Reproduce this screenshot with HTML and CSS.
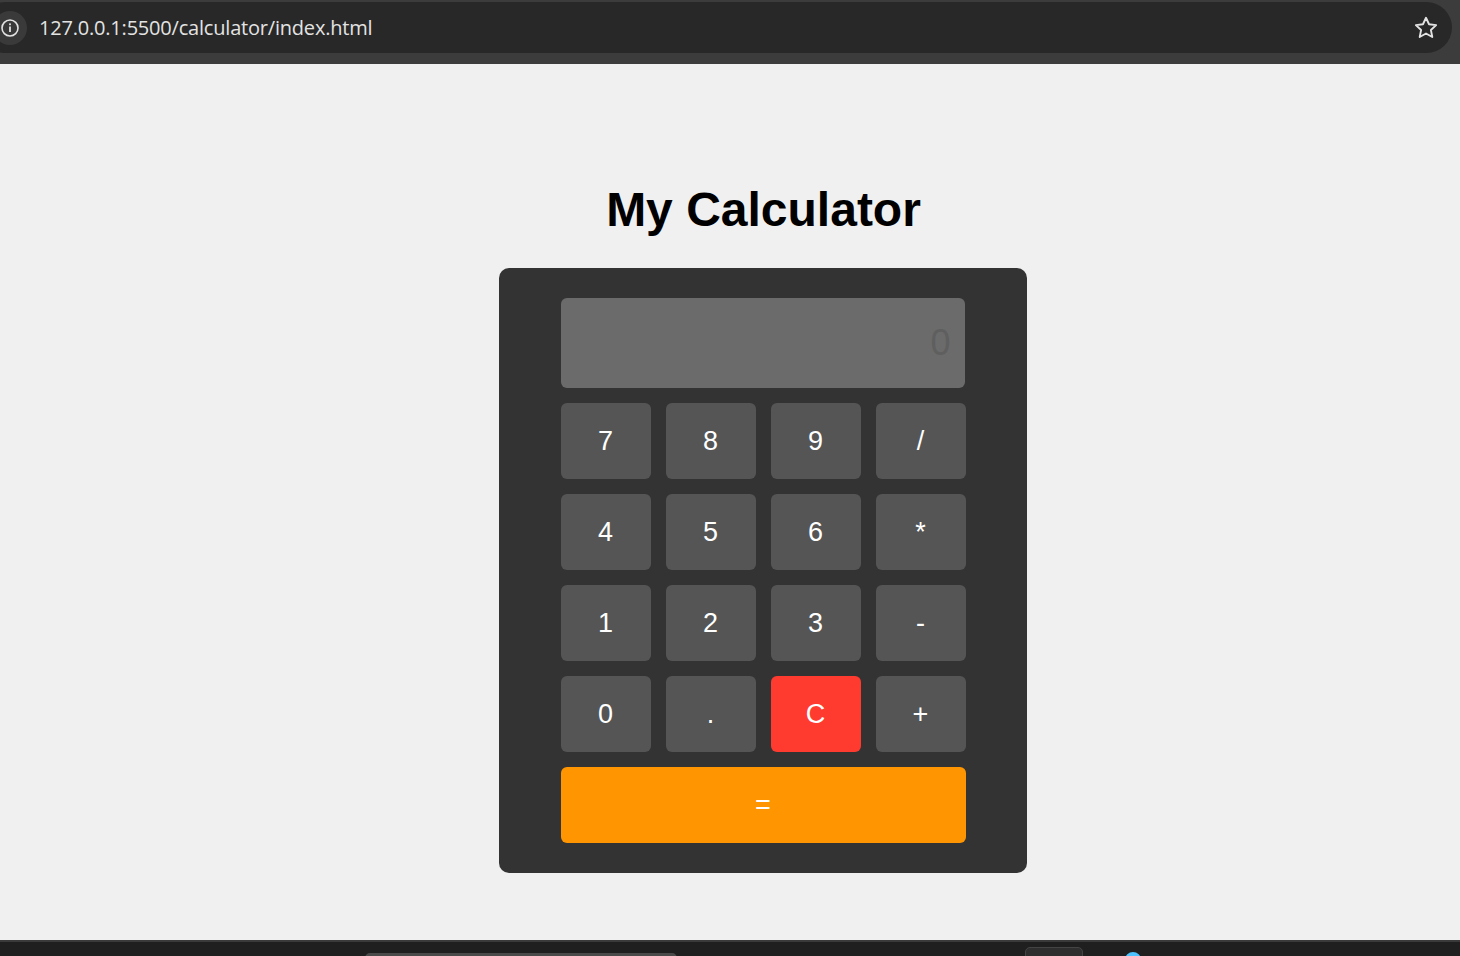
FILE: index.html
```html
<!DOCTYPE html>
<html>
<head>
<meta charset="utf-8">
<title>Calculator</title>
<link rel="stylesheet" href="styles.css">
</head>
<body>
<div class="chrome">
  <div class="omnibox">
    <span class="info-icon">
      <svg width="20" height="20" viewBox="0 0 20 20"><circle cx="10" cy="10" r="8" fill="none" stroke="#e3e3e3" stroke-width="1.6"/><rect x="9.1" y="8.5" width="1.8" height="5.5" fill="#e3e3e3"/><rect x="9.1" y="5.4" width="1.8" height="1.8" fill="#e3e3e3"/></svg>
    </span>
    <span class="url">127.0.0.1:5500/calculator/index.html</span>
    <span class="star">
      <svg width="28" height="28" viewBox="0 0 24 24"><path d="M12 3.2l2.6 5.6 6.1.7-4.5 4.2 1.2 6-5.4-3-5.4 3 1.2-6-4.5-4.2 6.1-.7z" fill="none" stroke="#e3e3e3" stroke-width="1.6" stroke-linejoin="round"/></svg>
    </span>
  </div>
</div>
<main class="page">
  <h1 class="title">My Calculator</h1>
  <div class="calculator">
    <div class="display">0</div>
    <div class="keys">
      <button class="key">7</button>
      <button class="key">8</button>
      <button class="key">9</button>
      <button class="key">/</button>
      <button class="key">4</button>
      <button class="key">5</button>
      <button class="key">6</button>
      <button class="key">*</button>
      <button class="key">1</button>
      <button class="key">2</button>
      <button class="key">3</button>
      <button class="key">-</button>
      <button class="key">0</button>
      <button class="key">.</button>
      <button class="key key-clear">C</button>
      <button class="key">+</button>
      <button class="key key-equals">=</button>
    </div>
  </div>
</main>
<div class="taskbar">
  <span class="tb-tab"></span>
  <span class="tb-app"></span>
  <span class="tb-dot"></span>
</div>
</body>
</html>
```
FILE: styles.css
```css
* { box-sizing: border-box; }
html, body { margin: 0; padding: 0; }
body {
  width: 1460px;
  height: 956px;
  overflow: hidden;
  background: #f0f0f0;
  font-family: "Liberation Sans", Arial, sans-serif;
  display: flex;
  flex-direction: column;
}
.chrome {
  height: 64px;
  background: #3c3c3c;
  padding-top: 2px;
  flex: none;
}
.omnibox {
  height: 51px;
  margin-left: -20px;
  margin-right: 8px;
  background: #282828;
  border-radius: 26px;
  display: flex;
  align-items: center;
  padding-left: 20px;
  padding-right: 12px;
}
.info-icon {
  width: 34px;
  height: 34px;
  margin-left: -7px;
  border-radius: 50%;
  background: #3a3a3a;
  display: flex;
  align-items: center;
  justify-content: center;
}
.url {
  margin-left: 12px;
  font-family: "Open Sans", "Noto Sans", sans-serif;
  font-size: 20px;
  color: #e3e3e3;
  letter-spacing: -0.2px;
  flex: 1;
}
.star { display: flex; }
.page {
  flex: 1;
  display: flex;
  flex-direction: column;
  align-items: center;
}
.title {
  margin: 118px 0 0;
  font-size: 48px;
  line-height: 56px;
  font-weight: bold;
  color: #000;
  padding-left: 67px;
}
.calculator {
  margin-top: 30px;
  margin-left: 65px;
  width: 528px;
  background: #333333;
  border-radius: 10px;
  padding: 30px 61px 30.5px 62px;
}
.display {
  width: 404px;
  height: 90px;
  background: #6b6b6b;
  border-radius: 6px;
  color: #5f5f5f;
  font-size: 36px;
  text-align: right;
  line-height: 90px;
  padding-right: 14px;
}
.keys {
  margin-top: 15px;
  display: grid;
  grid-template-columns: repeat(4, 90px);
  grid-auto-rows: 75.5px;
  column-gap: 15px;
  row-gap: 15.5px;
}
.key {
  border: none;
  border-radius: 6px;
  background: #555555;
  color: #ffffff;
  font-family: "Liberation Sans", Arial, sans-serif;
  font-size: 27px;
  padding: 2px 0 0;
  cursor: pointer;
}
.key-clear { background: #ff3b30; }
.key-equals {
  grid-column: 1 / -1;
  background: #ff9500;
}
.taskbar {
  height: 16px;
  flex: none;
  background: #1f1f1f;
  border-top: 2px solid #3a3a3a;
  position: relative;
}
.tb-tab {
  position: absolute;
  left: 365px;
  top: 11px;
  width: 312px;
  height: 10px;
  border-radius: 6px;
  background: #4a4a4a;
}
.tb-app {
  position: absolute;
  left: 1025px;
  top: 5px;
  width: 58px;
  height: 20px;
  border-radius: 5px;
  background: #2e2e2e;
  border: 1px solid #444;
}
.tb-dot {
  position: absolute;
  left: 1125px;
  top: 10px;
  width: 16px;
  height: 16px;
  border-radius: 50%;
  background: #4cc2ff;
}
```
